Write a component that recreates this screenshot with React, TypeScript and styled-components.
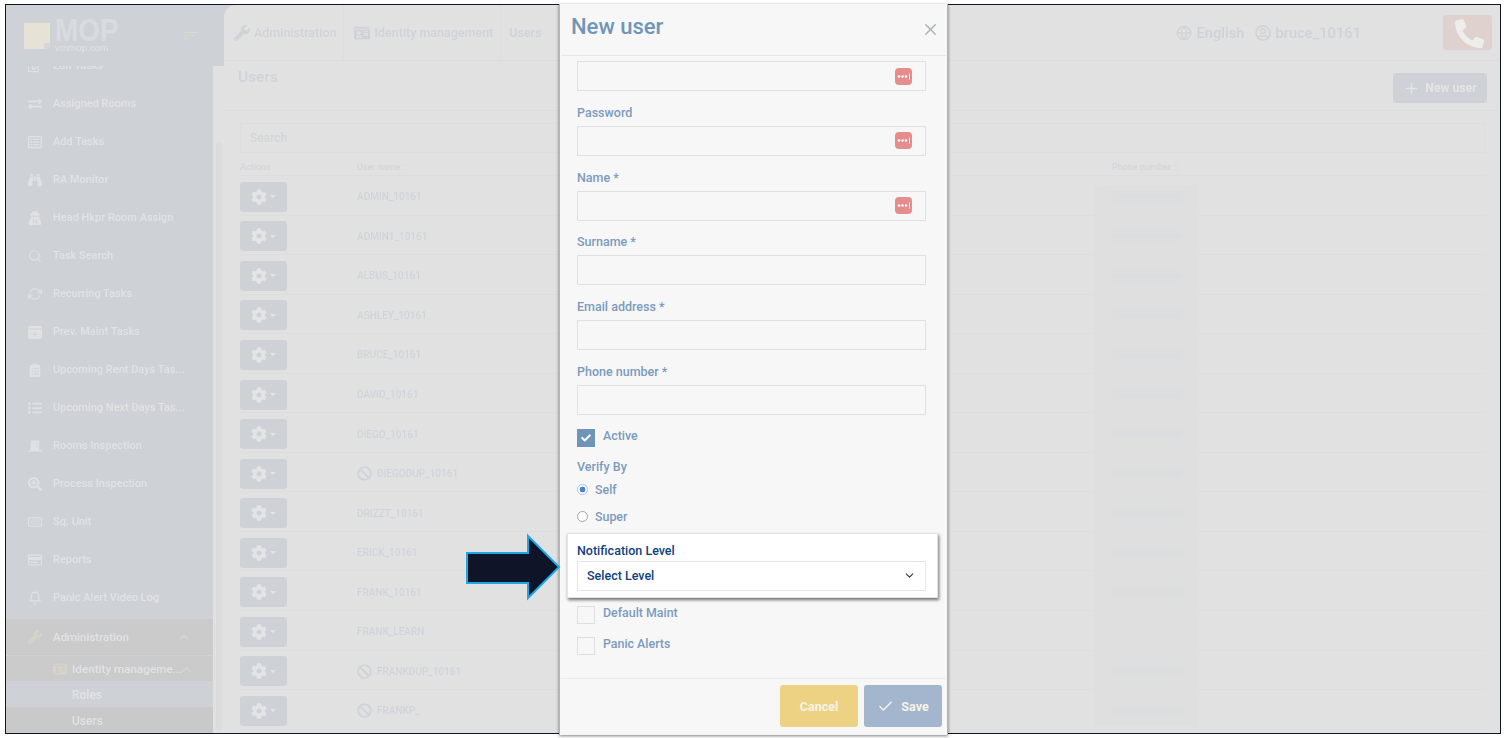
import React from "react";
import styled, { createGlobalStyle } from "styled-components";
import {
  FaBan, FaBinoculars, FaClipboardList, FaCog, FaDoorClosed, FaExchangeAlt, FaIdCard, FaListUl,
  FaPhoneAlt, FaRegCreditCard, FaRegKeyboard, FaRegListAlt, FaRegUserCircle, FaSearchPlus,
  FaUserSecret, FaWrench, FaRegEdit, FaCheck,
} from "react-icons/fa";
import { BsCalendarPlusFill } from "react-icons/bs";
import { FiBell, FiCheck, FiChevronDown, FiChevronUp, FiGlobe, FiPlus, FiRefreshCw, FiSearch, FiX } from "react-icons/fi";

const GlobalStyle = createGlobalStyle`
  html, body {
    margin: 0;
    padding: 0;
    background: #fff;
    font-family: Roboto, "Liberation Sans", sans-serif;
    overflow: hidden;
  }
`;

const Page = styled.div`
  position: relative;
  width: 1506px;
  height: 738px;
  padding: 4px 0 0 5px;
  box-sizing: border-box;
`;

const Frame = styled.div`
  width: 1496px;
  height: 730px;
  box-sizing: border-box;
  border: 1px solid #11152b;
  overflow: hidden;
`;

const Backdrop = styled.div`
  display: flex;
  height: 100%;
  background: #e1e1e1;
  filter: blur(0.4px);
`;

/* ---------- sidebar ---------- */

const Sidebar = styled.aside`
  width: 218px;
  flex: none;
  display: flex;
  flex-direction: column;
`;

const Brand = styled.div`
  height: 61px;
  flex: none;
  position: relative;
  z-index: 1;
  background: #ced2d7;
  display: flex;
  align-items: center;
  padding: 0 25px 0 18px;
`;

const LogoMark = styled.div`
  position: relative;
  width: 26px;
  height: 26px;
  background: #e6e2d6;
  flex: none;
  &::after {
    content: "";
    position: absolute;
    right: 0;
    bottom: 0;
    width: 6px;
    height: 6px;
    background: #d3d6da;
  }
`;

const LogoText = styled.div`
  margin-left: 5px;
  display: flex;
  flex-direction: column;
  color: #d9dcdf;
  font-family: "Liberation Sans", sans-serif;
`;

const LogoName = styled.span`
  font-size: 28px;
  line-height: 24px;
  font-weight: 700;
  transform: scaleY(1.14);
  transform-origin: center;
`;

const LogoSite = styled.span`
  font-size: 9.8px;
  line-height: 9px;
  margin-top: 0;
  color: #e2e3e4;
`;

const Burger = styled.div`
  margin-left: auto;
  display: flex;
  flex-direction: column;
  gap: 2px;
  width: 15px;
`;

const BurgerLine = styled.span<{ $width: number }>`
  display: block;
  height: 1px;
  width: ${({ $width }) => $width}px;
  background: #dbd9cb;
`;

const NavColumn = styled.div`
  flex: 1;
  display: flex;
  min-height: 0;
`;

const NavList = styled.nav`
  width: 207px;
  flex: none;
  background: #ced2d7;
  overflow: hidden;
`;

const NavInner = styled.div`
  margin-top: -20px;
`;

const NavRow = styled.div`
  height: 38px;
  box-sizing: border-box;
  display: flex;
  align-items: center;
  padding: 1px 0 0 22px;
  color: #e1e2e4;
  font-size: 11px;
  font-weight: 500;
  white-space: nowrap;
  svg {
    width: 14px;
    height: 14px;
    flex: none;
    margin-right: 11px;
    color: #dfe1e3;
  }
`;

const AdminRow = styled(NavRow)`
  height: 37px;
  background: #cbcbcc;
  border-bottom: 1px solid #d2d3d5;
  padding: 0 22px 1px 22px;
  margin-top: 3px;
  font-size: 11.5px;
  svg:first-child {
    color: #d8d3c9;
  }
  svg:last-child {
    margin: 0 0 0 auto;
    color: #d6d6d6;
  }
`;

const IdentityRow = styled.div`
  height: 25px;
  box-sizing: border-box;
  padding: 1px 0 0 47px;
  background: #cbcbcc;
  display: flex;
  align-items: center;
  color: #e1e2e4;
  font-size: 11.7px;
  font-weight: 500;
  white-space: nowrap;
  svg:first-child {
    width: 14px;
    height: 14px;
    margin-right: 5px;
    color: #d8d3c9;
  }
  svg:last-child {
    width: 15px;
    height: 15px;
    margin-left: -3px;
    color: #d6d6d6;
  }
`;

const SubRow = styled.div<{ $active?: boolean }>`
  height: 26px;
  box-sizing: border-box;
  display: flex;
  align-items: center;
  padding: 2px 0 0 66px;
  background: ${({ $active }) => ($active ? "#c9c9ca" : "#ced2d7")};
  color: #e1e2e4;
  font-size: 12px;
  font-weight: 500;
`;

const NavGutter = styled.div`
  flex: 1;
  display: flex;
  align-items: stretch;
  padding: 76px 2px 3px 3px;
  box-sizing: border-box;
`;

const NavThumb = styled.div`
  flex: 1;
  background: #dcdcdc;
  border-radius: 3px;
`;

/* ---------- main ---------- */

const Main = styled.main`
  flex: 1;
  min-width: 0;
  display: flex;
  flex-direction: column;
  background: #e1e1e1;
  position: relative;
`;

const MainCorner = styled.div`
  background: #ced2d7;
  flex: none;
`;

const TopBarShape = styled.header`
  height: 55px;
  box-sizing: content-box;
  border-bottom: 1px solid #dcdcdc;
  border-top-left-radius: 12px;
  background: #e1e1e1;
  display: flex;
  align-items: center;
  padding-right: 8px;
`;

const Crumb = styled.div<{ $last?: boolean }>`
  height: 100%;
  box-sizing: border-box;
  display: flex;
  align-items: center;
  gap: 4px;
  padding: 0 ${({ $last }) => ($last ? 0 : 7)}px 0 ${({ $last }) => ($last ? 8 : 10)}px;
  border-right: ${({ $last }) => ($last ? "none" : "1px solid #dddddd")};
  color: #cfd3d8;
  font-size: 12.5px;
  font-weight: 500;
  svg {
    width: 16px;
    height: 16px;
  }
`;

const TopTools = styled.div`
  margin-left: auto;
  display: flex;
  align-items: center;
  color: #cfd3d8;
  font-size: 14.7px;
  font-weight: 500;
`;

const ToolItem = styled.span`
  display: flex;
  align-items: center;
  gap: 5px;
  margin-right: 10px;
  svg {
    width: 16px;
    height: 16px;
  }
`;

const PhoneButton = styled.div`
  width: 49px;
  height: 35px;
  margin-left: 72px;
  border-radius: 3px;
  background: #dfd2ce;
  display: flex;
  align-items: center;
  justify-content: center;
  color: #eeeded;
  svg {
    width: 29px;
    height: 29px;
    margin: 2px 0 0 3px;
  }
`;

const TitleBar = styled.div`
  height: 49px;
  flex: none;
  border-bottom: 1px solid #dddddd;
  display: flex;
  align-items: flex-start;
  justify-content: space-between;
  padding: 0 13px 0 14px;
`;

const PageTitle = styled.h1`
  margin: 6px 0 0;
  font-size: 15.5px;
  line-height: 20px;
  font-weight: 500;
  color: #cfd3d8;
`;

const NewUserButton = styled.div`
  width: 94px;
  height: 30px;
  margin-top: 12px;
  border-radius: 3px;
  background: #ced2d7;
  color: #e3e4e5;
  font-size: 12.2px;
  font-weight: 700;
  display: flex;
  align-items: center;
  justify-content: center;
  gap: 5px;
  svg {
    width: 17px;
    height: 17px;
  }
`;

const Content = styled.div`
  padding: 12px 15px 0 16px;
`;

const SearchBox = styled.div`
  height: 30px;
  box-sizing: border-box;
  border: 1px solid #dddddd;
  display: flex;
  align-items: center;
  padding-left: 9px;
  color: #d3d6da;
  font-size: 12px;
  font-weight: 500;
`;

const Table = styled.div`
  position: relative;
`;

const tableColumns = "117px 755px 1fr";

const HeadRow = styled.div`
  height: 23px;
  box-sizing: border-box;
  display: grid;
  grid-template-columns: ${tableColumns};
  align-items: end;
  padding-bottom: 3px;
  border-bottom: 1px solid #dddddd;
  color: #d3d5d8;
  font-size: 9px;
  font-weight: 500;
`;

const HeadCell = styled.span`
  display: flex;
  align-items: center;
  gap: 3px;
`;

const SortIcon = styled.svg`
  width: 5px;
  height: 9px;
  color: #dbdbdb;
`;

const Row = styled.div`
  position: relative;
  height: 39.55px;
  box-sizing: border-box;
  display: grid;
  grid-template-columns: ${tableColumns};
  align-items: center;
  padding-top: 3px;
  border-bottom: 1px solid #dddddd;
`;

const GearButton = styled.div`
  width: 47px;
  height: 30px;
  border-radius: 3px;
  background: #ced2d7;
  color: #e3e4e5;
  display: flex;
  align-items: center;
  justify-content: center;
  gap: 3px;
  svg {
    width: 16px;
    height: 16px;
  }
  &::after {
    content: "";
    border-top: 3px solid #e3e4e5;
    border-left: 3px solid transparent;
    border-right: 3px solid transparent;
  }
`;

const UserName = styled.div`
  display: flex;
  align-items: center;
  gap: 5px;
  color: #d0d4da;
  font-size: 10px;
  font-weight: 500;
  svg {
    width: 15px;
    height: 15px;
  }
`;

const PhoneMask = styled.div`
  position: absolute;
  left: 854px;
  top: 32px;
  width: 105px;
  height: 542px;
  background: #dfdfdf;
  z-index: 1;
`;

const PhoneValue = styled.div<{ $hidden?: boolean }>`
  position: relative;
  z-index: 2;
  width: 69px;
  height: 4px;
  margin-left: 1px;
  background: ${({ $hidden }) => ($hidden ? "transparent" : "#d9dbdd")};
  filter: blur(2px);
`;

/* ---------- modal ---------- */

const Modal = styled.div`
  position: absolute;
  left: 559px;
  top: 4px;
  width: 389px;
  height: 731px;
  box-sizing: border-box;
  display: flex;
  flex-direction: column;
  background: #f7f7f7;
  border-left: 1px solid #b4b4b4;
  border-right: 1px solid #b4b4b4;
  box-shadow: 0 1px 3px rgba(0, 0, 0, 0.5);
  z-index: 3;
`;

const ModalHeader = styled.div`
  height: 52px;
  flex: none;
  margin: 0 1px;
  box-sizing: border-box;
  border-bottom: 1px solid #e6e6e6;
  display: flex;
  align-items: center;
  justify-content: space-between;
  padding: 0 6px 0 10px;
`;

const ModalTitle = styled.h2`
  margin: -5px 0 0;
  font-size: 22px;
  font-weight: 500;
  line-height: 28px;
  color: #6f96b9;
`;

const CloseIcon = styled(FiX)`
  width: 19px;
  height: 19px;
  color: #a9acae;
  stroke-width: 1.5;
`;

const ModalBody = styled.div`
  flex: 1;
  min-height: 0;
  padding: 5px 21px 0 17px;
  display: flex;
  flex-direction: column;
`;

const Field = styled.div`
  margin-bottom: 13.8px;
`;

const FieldLabel = styled.label`
  display: block;
  height: 14px;
  line-height: 15px;
  margin-bottom: 7px;
  font-size: 12.5px;
  font-weight: 500;
  color: #7b9bbe;
`;

const InputBox = styled.div`
  height: 30px;
  box-sizing: border-box;
  border: 1px solid #e0e0e0;
  display: flex;
  align-items: center;
  justify-content: flex-end;
  padding-right: 13px;
`;

const KeyBadge = styled.span`
  width: 17px;
  height: 17px;
  border-radius: 4px;
  background: #e58d8d;
  color: #fff;
  display: flex;
  align-items: center;
  justify-content: center;
  svg {
    width: 14px;
    height: 7px;
  }
`;

const CheckRow = styled.div`
  display: flex;
  align-items: flex-start;
  gap: 8px;
  height: 18px;
  color: #7b9bbe;
  font-size: 12.4px;
  font-weight: 500;
  line-height: 14px;
`;

const CheckBox = styled.span<{ $checked?: boolean }>`
  width: 18px;
  height: 18px;
  box-sizing: border-box;
  flex: none;
  display: flex;
  align-items: center;
  justify-content: center;
  color: #fff;
  background: ${({ $checked }) => ($checked ? "#6e95b8" : "transparent")};
  border: 1px solid ${({ $checked }) => ($checked ? "#6e95b8" : "#dedede")};
  svg {
    width: 10px;
    height: 10px;
  }
`;

const VerifyLabel = styled.div`
  margin-top: 13px;
  height: 14px;
  line-height: 14px;
  color: #7b9bbe;
  font-size: 12.5px;
  font-weight: 500;
`;

const RadioRow = styled.div`
  display: flex;
  align-items: center;
  gap: 7px;
  height: 14px;
  margin-top: 9px;
  color: #7b9bbe;
  font-size: 12.4px;
  font-weight: 500;
  & + & {
    margin-top: 13px;
  }
`;

const Radio = styled.span<{ $on?: boolean }>`
  width: 11px;
  height: 11px;
  box-sizing: border-box;
  border-radius: 50%;
  border: 1px solid ${({ $on }) => ($on ? "#a9c3e6" : "#a6a6a6")};
  flex: none;
  background: ${({ $on }) => ($on ? "radial-gradient(circle, #4a82d6 0 2.6px, #fff 3.2px)" : "#fff")};
`;

const Callout = styled.div`
  margin: 9px -12px 0 -10px;
  height: 65px;
  box-sizing: border-box;
  padding: 10px 11px 0 9px;
  background: #fff;
  border: 1px solid #e4e4e4;
  box-shadow: 1px 2px 3px rgba(0, 0, 0, 0.55);
`;

const CalloutLabel = styled.div`
  height: 14px;
  line-height: 14px;
  margin-bottom: 3px;
  color: #123f7e;
  font-size: 12.5px;
  font-weight: 500;
`;

const SelectBox = styled.div`
  height: 30px;
  box-sizing: border-box;
  border: 1px solid #e2e6ea;
  display: flex;
  align-items: center;
  justify-content: space-between;
  padding: 0 9px 0 9px;
  color: #123f7e;
  font-size: 12.5px;
  font-weight: 500;
  svg {
    width: 13px;
    height: 13px;
    color: #333;
  }
`;

const LowerChecks = styled.div`
  margin-top: 8px;
  display: flex;
  flex-direction: column;
  gap: 13px;
`;

const ModalFooter = styled.div`
  height: 57px;
  flex: none;
  margin: 0 1px;
  box-sizing: border-box;
  border-top: 1px solid #ececec;
  display: flex;
  justify-content: flex-end;
  align-items: flex-start;
  gap: 6px;
  padding: 6px 4px 0 0;
`;

const FooterButton = styled.div<{ $bg: string }>`
  width: 78px;
  height: 42px;
  border-radius: 3px;
  background: ${({ $bg }) => $bg};
  color: #f6f3e8;
  font-size: 12.5px;
  font-weight: 700;
  display: flex;
  align-items: center;
  justify-content: center;
  gap: 7px;
  svg {
    width: 17px;
    height: 17px;
  }
`;

const Arrow = styled.svg`
  position: absolute;
  left: 465px;
  top: 533px;
  width: 97px;
  height: 69px;
  z-index: 4;
`;

const navItems: [React.ComponentType, string][] = [
  [FaRegEdit, "Edit Tasks"],
  [FaExchangeAlt, "Assigned Rooms"],
  [FaRegListAlt, "Add Tasks"],
  [FaBinoculars, "RA Monitor"],
  [FaUserSecret, "Head Hkpr Room Assign"],
  [FiSearch, "Task Search"],
  [FiRefreshCw, "Recurring Tasks"],
  [BsCalendarPlusFill, "Prev. Maint Tasks"],
  [FaClipboardList, "Upcoming Rent Days Tas..."],
  [FaListUl, "Upcoming Next Days Tas..."],
  [FaDoorClosed, "Rooms Inspection"],
  [FaSearchPlus, "Process Inspection"],
  [FaRegKeyboard, "Sq. Unit"],
  [FaRegCreditCard, "Reports"],
  [FiBell, "Panic Alert Video Log"],
];

const users: { name: string; banned?: boolean; noPhone?: boolean }[] = [
  { name: "ADMIN_10161" },
  { name: "ADMIN1_10161" },
  { name: "ALBUS_10161" },
  { name: "ASHLEY_10161" },
  { name: "BRUCE_10161" },
  { name: "DAVID_10161" },
  { name: "DIEGO_10161" },
  { name: "DIEGODUP_10161", banned: true },
  { name: "DRIZZT_10161" },
  { name: "ERICK_10161" },
  { name: "FRANK_10161" },
  { name: "FRANK_LEARN", noPhone: true },
  { name: "FRANKDUP_10161", banned: true },
  { name: "FRANKP_", banned: true },
];

const KeyDots = () => (
  <KeyBadge>
    <svg viewBox="0 0 14 7">
      <circle cx="2" cy="3.5" r="1.2" fill="currentColor" />
      <circle cx="5.5" cy="3.5" r="1.2" fill="currentColor" />
      <circle cx="9" cy="3.5" r="1.2" fill="currentColor" />
      <rect x="12" y="0.5" width="1" height="6" fill="currentColor" />
    </svg>
  </KeyBadge>
);

const Sort = () => (
  <SortIcon viewBox="0 0 5 9" fill="none" stroke="currentColor" strokeWidth="0.8">
    <path d="M0.6 3 2.5 1 4.4 3M0.6 6 2.5 8 4.4 6" />
  </SortIcon>
);

const TextField = ({ label, badge }: { label?: string; badge?: boolean }) => (
  <Field>
    {label && <FieldLabel>{label}</FieldLabel>}
    <InputBox>{badge && <KeyDots />}</InputBox>
  </Field>
);

export default function App() {
  return (
    <Page>
      <GlobalStyle />
      <Frame>
        <Backdrop>
          <Sidebar>
            <Brand>
              <LogoMark />
              <LogoText>
                <LogoName>MOP</LogoName>
                <LogoSite>vmmop.com</LogoSite>
              </LogoText>
              <Burger>
                <BurgerLine $width={15} />
                <BurgerLine $width={11} />
                <BurgerLine $width={6} />
              </Burger>
            </Brand>
            <NavColumn>
              <NavList>
                <NavInner>
                  {navItems.map(([Icon, label]) => (
                    <NavRow key={label}>
                      <Icon />
                      {label}
                    </NavRow>
                  ))}
                  <AdminRow>
                    <FaWrench />
                    Administration
                    <FiChevronUp />
                  </AdminRow>
                  <IdentityRow>
                    <FaIdCard />
                    Identity manageme...
                    <FiChevronUp />
                  </IdentityRow>
                  <SubRow>Roles</SubRow>
                  <SubRow $active>Users</SubRow>
                </NavInner>
              </NavList>
              <NavGutter>
                <NavThumb />
              </NavGutter>
            </NavColumn>
          </Sidebar>
          <Main>
            <MainCorner>
              <TopBarShape>
                <Crumb>
                  <FaWrench />
                  Administration
                </Crumb>
                <Crumb>
                  <FaIdCard />
                  Identity management
                </Crumb>
                <Crumb $last>Users</Crumb>
                <TopTools>
                  <ToolItem>
                    <FiGlobe />
                    English
                  </ToolItem>
                  <ToolItem>
                    <FaRegUserCircle />
                    bruce_10161
                  </ToolItem>
                  <PhoneButton>
                    <FaPhoneAlt />
                  </PhoneButton>
                </TopTools>
              </TopBarShape>
            </MainCorner>
            <TitleBar>
              <PageTitle>Users</PageTitle>
              <NewUserButton>
                <FiPlus />
                New user
              </NewUserButton>
            </TitleBar>
            <Content>
              <SearchBox>Search</SearchBox>
              <Table>
                <PhoneMask />
                <HeadRow>
                  <HeadCell>Actions</HeadCell>
                  <HeadCell>
                    User name
                    <Sort />
                  </HeadCell>
                  <HeadCell>
                    Phone number
                    <Sort />
                  </HeadCell>
                </HeadRow>
                {users.map((u) => (
                  <Row key={u.name}>
                    <GearButton>
                      <FaCog />
                    </GearButton>
                    <UserName>
                      {u.banned && <FaBan />}
                      {u.name}
                    </UserName>
                    <PhoneValue $hidden={u.noPhone} />
                  </Row>
                ))}
              </Table>
            </Content>
          </Main>
        </Backdrop>
      </Frame>

      <Modal>
        <ModalHeader>
          <ModalTitle>New user</ModalTitle>
          <CloseIcon />
        </ModalHeader>
        <ModalBody>
          <TextField badge />
          <TextField label="Password" badge />
          <TextField label="Name *" badge />
          <TextField label="Surname *" />
          <TextField label="Email address *" />
          <TextField label="Phone number *" />
          <CheckRow>
            <CheckBox $checked>
              <FaCheck />
            </CheckBox>
            Active
          </CheckRow>
          <VerifyLabel>Verify By</VerifyLabel>
          <RadioRow>
            <Radio $on />
            Self
          </RadioRow>
          <RadioRow>
            <Radio />
            Super
          </RadioRow>
          <Callout>
            <CalloutLabel>Notification Level</CalloutLabel>
            <SelectBox>
              Select Level
              <FiChevronDown />
            </SelectBox>
          </Callout>
          <LowerChecks>
            <CheckRow>
              <CheckBox />
              Default Maint
            </CheckRow>
            <CheckRow>
              <CheckBox />
              Panic Alerts
            </CheckRow>
          </LowerChecks>
        </ModalBody>
        <ModalFooter>
          <FooterButton $bg="#eed283">Cancel</FooterButton>
          <FooterButton $bg="#a4b6cd">
            <FiCheck />
            Save
          </FooterButton>
        </ModalFooter>
      </Modal>

      <Arrow viewBox="465 533 97 69">
        <polygon
          points="467,553 528,553 528,536 559,567 528,598 528,583 467,583"
          fill="#101428"
          stroke="#1ea7e6"
          strokeWidth="2"
        />
      </Arrow>
    </Page>
  );
}
